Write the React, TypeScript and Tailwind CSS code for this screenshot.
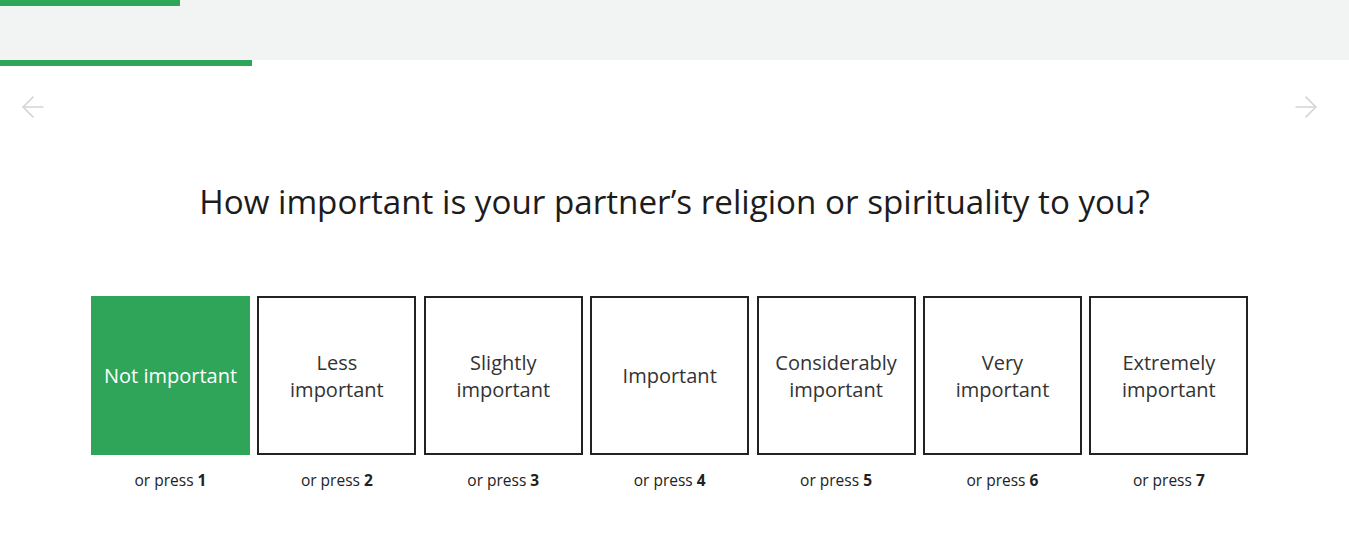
import { ArrowLeft, ArrowRight } from "lucide-react";

const options = [
  "Not important",
  "Less important",
  "Slightly important",
  "Important",
  "Considerably important",
  "Very important",
  "Extremely important",
];

export default function App() {
  const selected = 0;

  return (
    <div className="w-[1349px] h-[537px] bg-white overflow-hidden" style={{ fontFamily: '"Open Sans", sans-serif' }}>
      <header className="h-[60px] bg-[#f2f3f3]">
        <div className="h-[6px] w-[180px] bg-[#2fa55a]" />
      </header>
      <div className="h-[6px] w-[252px] bg-[#2fa55a]" />

      <div className="flex justify-between items-center pl-[16px] pr-[26px] mt-[26px] h-[30px]">
        <ArrowLeft size={34} strokeWidth={1.1} className="text-[#d4d4d4]" />
        <ArrowRight size={34} strokeWidth={1.1} className="text-[#d4d4d4]" />
      </div>

      <h1 className="mt-[58px] text-center text-[33.2px] leading-[44px] text-[#1c1c1c]">
        How important is your partner’s religion or spirituality to you?
      </h1>

      <div className="mt-[72px] ml-[91px] flex gap-[7.4px]">
        {options.map((label, i) => (
          <div key={label} className="w-[159px] flex flex-col items-center">
            <button
              className={
                i === selected
                  ? "w-[159px] h-[159px] bg-[#2fa55a] text-white flex items-center justify-center text-center text-[20px] leading-[27px] px-2"
                  : "w-[159px] h-[159px] bg-white border-2 border-[#222] text-[#333] flex items-center justify-center text-center text-[20px] leading-[27px] px-2"
              }
            >
              {label}
            </button>
            <div className="mt-[14px] text-[15.5px] text-[#222]">
              or press <span className="font-bold">{i + 1}</span>
            </div>
          </div>
        ))}
      </div>
    </div>
  );
}
